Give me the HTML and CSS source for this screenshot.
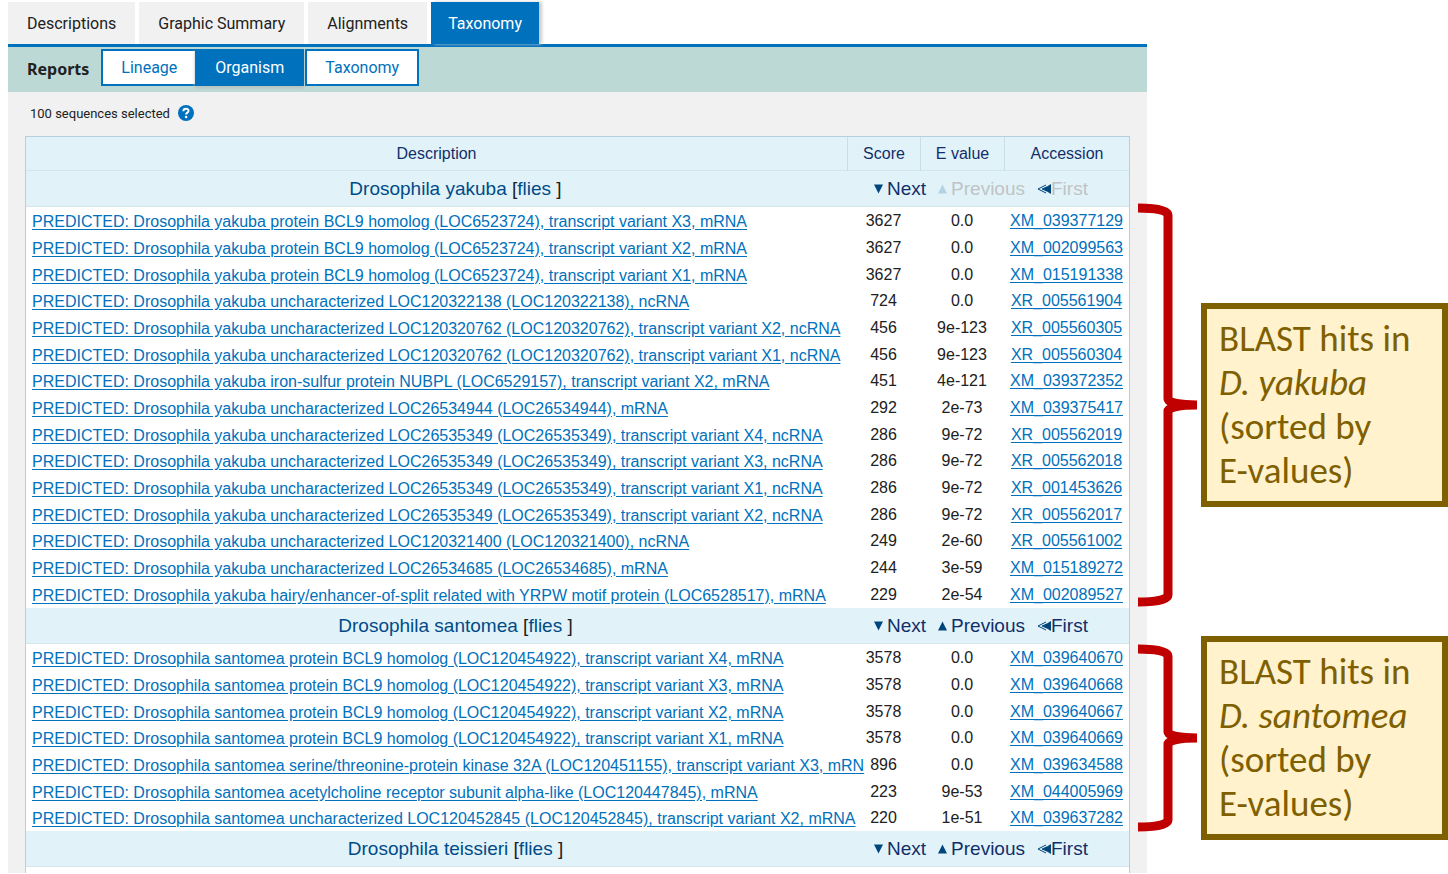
FILE: index.html
```html
<!DOCTYPE html>
<html lang="en">
<head>
<meta charset="utf-8">
<title>BLAST taxonomy report</title>
<link rel="stylesheet" href="styles.css">
</head>
<body>
<svg class="symbols" aria-hidden="true">
  <symbol id="down" viewBox="0 0 10 10"><path d="M0 0H10L5 10Z" fill="currentColor"/></symbol>
  <symbol id="up" viewBox="0 0 10 10"><path d="M0 10H10L5 0Z" fill="currentColor"/></symbol>
  <symbol id="first" viewBox="0 0 14 10"><path d="M6 5L14 0V10Z" fill="currentColor"/><path d="M9 1L1 5L9 9M5 5L10 3M5 5L10 7" fill="none" stroke="currentColor"/></symbol>
</svg>
<div class="page">
  <main class="results">
    <nav class="tabs" aria-label="Result views">
      <button class="tab">Descriptions</button>
      <button class="tab">Graphic Summary</button>
      <button class="tab">Alignments</button>
      <button class="tab tab-active">Taxonomy</button>
    </nav>
    <div class="reports">
      <h2 class="reports-title">Reports</h2>
      <div class="switch">
        <button class="option">Lineage</button>
        <button class="option option-active">Organism</button>
        <button class="option option-last">Taxonomy</button>
      </div>
    </div>
    <section class="panel">
      <div class="selected">
        <span>100 sequences selected</span>
        <button class="help" aria-label="Help"><svg viewBox="0 0 16 16" width="16" height="16"><circle cx="8" cy="8" r="8" fill="#0071bc"/><path d="M5.4 6.2C5.5 2.9 10.6 3.1 10.5 6C10.4 7.7 8.1 7.6 8.1 9.6" fill="none" stroke="#fff" stroke-width="2"/><circle cx="8.1" cy="12" r="1.3" fill="#fff"/></svg></button>
      </div>
      <table class="hits">
        <colgroup><col><col class="col-score"><col class="col-evalue"><col class="col-accession"></colgroup>
        <thead>
          <tr><th scope="col">Description</th><th scope="col">Score</th><th scope="col">E value</th><th scope="col">Accession</th></tr>
        </thead>
        <tbody class="organism">
          <tr><td class="name"><a href="#yakuba">Drosophila yakuba</a> [<a href="#flies">flies</a> ]</td><td colspan="3"><div class="jump"><a class="next" href="#santomea"><svg class="tri"><use href="#down"/></svg>Next</a><a class="previous off"><svg class="tri"><use href="#up"/></svg>Previous</a><a class="first off"><svg class="back"><use href="#first"/></svg>First</a></div></td></tr>
        </tbody>
        <tbody class="rows" id="yakuba">
          <tr><td><a href="#a">PREDICTED: Drosophila yakuba protein BCL9 homolog (LOC6523724), transcript variant X3, mRNA</a></td><td>3627</td><td>0.0</td><td><a href="#a">XM_039377129</a></td></tr>
          <tr><td><a href="#a">PREDICTED: Drosophila yakuba protein BCL9 homolog (LOC6523724), transcript variant X2, mRNA</a></td><td>3627</td><td>0.0</td><td><a href="#a">XM_002099563</a></td></tr>
          <tr><td><a href="#a">PREDICTED: Drosophila yakuba protein BCL9 homolog (LOC6523724), transcript variant X1, mRNA</a></td><td>3627</td><td>0.0</td><td><a href="#a">XM_015191338</a></td></tr>
          <tr><td><a href="#a">PREDICTED: Drosophila yakuba uncharacterized LOC120322138 (LOC120322138), ncRNA</a></td><td>724</td><td>0.0</td><td><a href="#a">XR_005561904</a></td></tr>
          <tr><td><a href="#a">PREDICTED: Drosophila yakuba uncharacterized LOC120320762 (LOC120320762), transcript variant X2, ncRNA</a></td><td>456</td><td>9e-123</td><td><a href="#a">XR_005560305</a></td></tr>
          <tr><td><a href="#a">PREDICTED: Drosophila yakuba uncharacterized LOC120320762 (LOC120320762), transcript variant X1, ncRNA</a></td><td>456</td><td>9e-123</td><td><a href="#a">XR_005560304</a></td></tr>
          <tr><td><a href="#a">PREDICTED: Drosophila yakuba iron-sulfur protein NUBPL (LOC6529157), transcript variant X2, mRNA</a></td><td>451</td><td>4e-121</td><td><a href="#a">XM_039372352</a></td></tr>
          <tr><td><a href="#a">PREDICTED: Drosophila yakuba uncharacterized LOC26534944 (LOC26534944), mRNA</a></td><td>292</td><td>2e-73</td><td><a href="#a">XM_039375417</a></td></tr>
          <tr><td><a href="#a">PREDICTED: Drosophila yakuba uncharacterized LOC26535349 (LOC26535349), transcript variant X4, ncRNA</a></td><td>286</td><td>9e-72</td><td><a href="#a">XR_005562019</a></td></tr>
          <tr><td><a href="#a">PREDICTED: Drosophila yakuba uncharacterized LOC26535349 (LOC26535349), transcript variant X3, ncRNA</a></td><td>286</td><td>9e-72</td><td><a href="#a">XR_005562018</a></td></tr>
          <tr><td><a href="#a">PREDICTED: Drosophila yakuba uncharacterized LOC26535349 (LOC26535349), transcript variant X1, ncRNA</a></td><td>286</td><td>9e-72</td><td><a href="#a">XR_001453626</a></td></tr>
          <tr><td><a href="#a">PREDICTED: Drosophila yakuba uncharacterized LOC26535349 (LOC26535349), transcript variant X2, ncRNA</a></td><td>286</td><td>9e-72</td><td><a href="#a">XR_005562017</a></td></tr>
          <tr><td><a href="#a">PREDICTED: Drosophila yakuba uncharacterized LOC120321400 (LOC120321400), ncRNA</a></td><td>249</td><td>2e-60</td><td><a href="#a">XR_005561002</a></td></tr>
          <tr><td><a href="#a">PREDICTED: Drosophila yakuba uncharacterized LOC26534685 (LOC26534685), mRNA</a></td><td>244</td><td>3e-59</td><td><a href="#a">XM_015189272</a></td></tr>
          <tr><td><a href="#a">PREDICTED: Drosophila yakuba hairy/enhancer-of-split related with YRPW motif protein (LOC6528517), mRNA</a></td><td>229</td><td>2e-54</td><td><a href="#a">XM_002089527</a></td></tr>
        </tbody>
        <tbody class="organism">
          <tr><td class="name"><a href="#santomea">Drosophila santomea</a> [<a href="#flies">flies</a> ]</td><td colspan="3"><div class="jump"><a class="next" href="#teissieri"><svg class="tri"><use href="#down"/></svg>Next</a><a class="previous" href="#yakuba"><svg class="tri"><use href="#up"/></svg>Previous</a><a class="first" href="#yakuba"><svg class="back"><use href="#first"/></svg>First</a></div></td></tr>
        </tbody>
        <tbody class="rows" id="santomea">
          <tr><td><a href="#a">PREDICTED: Drosophila santomea protein BCL9 homolog (LOC120454922), transcript variant X4, mRNA</a></td><td>3578</td><td>0.0</td><td><a href="#a">XM_039640670</a></td></tr>
          <tr><td><a href="#a">PREDICTED: Drosophila santomea protein BCL9 homolog (LOC120454922), transcript variant X3, mRNA</a></td><td>3578</td><td>0.0</td><td><a href="#a">XM_039640668</a></td></tr>
          <tr><td><a href="#a">PREDICTED: Drosophila santomea protein BCL9 homolog (LOC120454922), transcript variant X2, mRNA</a></td><td>3578</td><td>0.0</td><td><a href="#a">XM_039640667</a></td></tr>
          <tr><td><a href="#a">PREDICTED: Drosophila santomea protein BCL9 homolog (LOC120454922), transcript variant X1, mRNA</a></td><td>3578</td><td>0.0</td><td><a href="#a">XM_039640669</a></td></tr>
          <tr><td><a href="#a">PREDICTED: Drosophila santomea serine/threonine-protein kinase 32A (LOC120451155), transcript variant X3, mRN</a></td><td>896</td><td>0.0</td><td><a href="#a">XM_039634588</a></td></tr>
          <tr><td><a href="#a">PREDICTED: Drosophila santomea acetylcholine receptor subunit alpha-like (LOC120447845), mRNA</a></td><td>223</td><td>9e-53</td><td><a href="#a">XM_044005969</a></td></tr>
          <tr><td><a href="#a">PREDICTED: Drosophila santomea uncharacterized LOC120452845 (LOC120452845), transcript variant X2, mRNA</a></td><td>220</td><td>1e-51</td><td><a href="#a">XM_039637282</a></td></tr>
        </tbody>
        <tbody class="organism" id="teissieri">
          <tr><td class="name"><a href="#teissieri">Drosophila teissieri</a> [<a href="#flies">flies</a> ]</td><td colspan="3"><div class="jump"><a class="next" href="#next"><svg class="tri"><use href="#down"/></svg>Next</a><a class="previous" href="#santomea"><svg class="tri"><use href="#up"/></svg>Previous</a><a class="first" href="#yakuba"><svg class="back"><use href="#first"/></svg>First</a></div></td></tr>
        </tbody>
      </table>
    </section>
  </main>
  <aside class="notes">
    <div class="callout">
      <svg class="brace" width="59" height="404" viewBox="0 0 59 404" aria-hidden="true"><path d="M0 5C16 5 30 7 30 12V196C30 200 43 202 59 202C43 202 30 204 30 208V392C30 397 16 399 0 399"/></svg>
      <p class="note">BLAST hits in<br><em>D. yakuba</em><br>(sorted by<br>E-values)</p>
    </div>
    <div class="callout">
      <svg class="brace" width="59" height="188" viewBox="0 0 59 188" aria-hidden="true"><path d="M0 5C16 5 30 7 30 12V88C30 92 43 94 59 94C43 94 30 96 30 100V176C30 181 16 183 0 183"/></svg>
      <p class="note">BLAST hits in<br><em>D. santomea</em><br>(sorted by<br>E-values)</p>
    </div>
  </aside>
</div>
</body>
</html>
```

FILE: styles.css
```css
* { box-sizing: border-box; }

body {
  margin: 0;
  background: #fff;
  color: #212121;
  font-family: "Liberation Sans", Arial, sans-serif;
  font-size: 16px;
}

button {
  margin: 0;
  border: 0;
  font-family: Roboto, sans-serif;
  font-size: 16px;
  cursor: pointer;
}

.symbols { display: none; }

.page {
  display: grid;
  grid-template-columns: minmax(0, 1fr) 301px;
  padding: 2px 0 1px 8px;
}

.tabs {
  display: flex;
  gap: 4px;
  border-bottom: 3px solid #0071bc;
}

.tab {
  height: 42px;
  padding: 0 19px;
  background: #f1f1f1;
  color: #212121;
}

.tab-active {
  padding: 0 17px;
  background: #0071bc;
  color: #fff;
  box-shadow: 3px 0 3px #ccc;
}

.reports {
  display: flex;
  align-items: flex-start;
  gap: 12px;
  height: 45px;
  padding: 2px 0 0 19px;
  background: #bdd9d5;
}

.reports-title {
  margin: 0;
  font-family: "Noto Sans", sans-serif;
  font-size: 16px;
  line-height: 40px;
}

.switch { display: flex; }

.option {
  height: 37px;
  padding: 0 18px;
  border: 2px solid #0071bc;
  background: #fff;
  color: #0071bc;
}

.option-active {
  margin-left: -2px;
  background: #0071bc;
  color: #fff;
  box-shadow: 0 2px 3px #b5c0c0;
}

.option-last { margin-left: 1px; }

.panel {
  padding: 0 17px;
  background: #f1f1f1;
}

.selected {
  display: flex;
  align-items: center;
  gap: 8px;
  height: 44px;
  padding: 0 0 2px 5px;
  font-family: Roboto, sans-serif;
  font-size: 13px;
}

.help {
  display: flex;
  padding: 0;
  background: none;
}

.hits {
  width: 100%;
  table-layout: fixed;
  border-collapse: separate;
  border-spacing: 0;
  border: 1px solid #b5cfdf;
  border-bottom: 0;
  padding-bottom: 6px;
  background: #fff;
}

.col-score { width: 73px; }
.col-evalue { width: 84px; }
.col-accession { width: 125px; }

.hits th {
  height: 34px;
  padding: 0;
  border-bottom: 1px solid #d3e6ee;
  background: #e1f3f9;
  color: #112e6b;
  font-weight: 400;
}

.hits th + th { border-left: 1px solid #c9dde6; }

.hits td {
  padding: 0;
  text-align: center;
  white-space: nowrap;
}

.organism td {
  height: 36px;
  border-bottom: 1px solid #d3e6ee;
  background: #e1f3f9;
  font-size: 19px;
}

.organism .name { padding-left: 38px; }

.organism a {
  color: #004b87;
  text-decoration: none;
}

.jump {
  display: flex;
  padding-left: 27px;
}

.organism .jump a {
  display: flex;
  align-items: center;
  color: #112e6b;
}

.organism .jump .off { color: #bfc3c6; }

.tri {
  width: 9px;
  height: 10px;
  margin-right: 4px;
  color: #00457c;
}

.back {
  width: 14px;
  height: 10px;
  color: #00457c;
}

.off .tri { color: #b5d2e2; }

.previous { margin: 0 12px; }

.rows td {
  height: 27px;
  line-height: 26px;
}

.rows tr:nth-child(3n+4) td { height: 26px; }

.rows td:first-child {
  padding: 1px 0 0 6px;
  text-align: left;
  line-height: 25px;
}

.rows a {
  color: #0071bc;
  text-underline-offset: 2px;
}

.notes {
  display: flex;
  flex-direction: column;
  gap: 29px;
  margin: 201px 0 0 -9px;
}

.callout {
  display: flex;
  align-items: center;
  gap: 4px;
  position: relative;
}

.brace {
  flex: none;
  fill: none;
  stroke: #c00000;
  stroke-width: 9px;
}

.note {
  flex: 1;
  margin: 0;
  padding: 8px 12px;
  border: 6px solid #7f6000;
  background: #fff2cc;
  color: #7f6000;
  font-family: Carlito, Lato, sans-serif;
  font-size: 37px;
  line-height: 44px;
  white-space: nowrap;
}
```
